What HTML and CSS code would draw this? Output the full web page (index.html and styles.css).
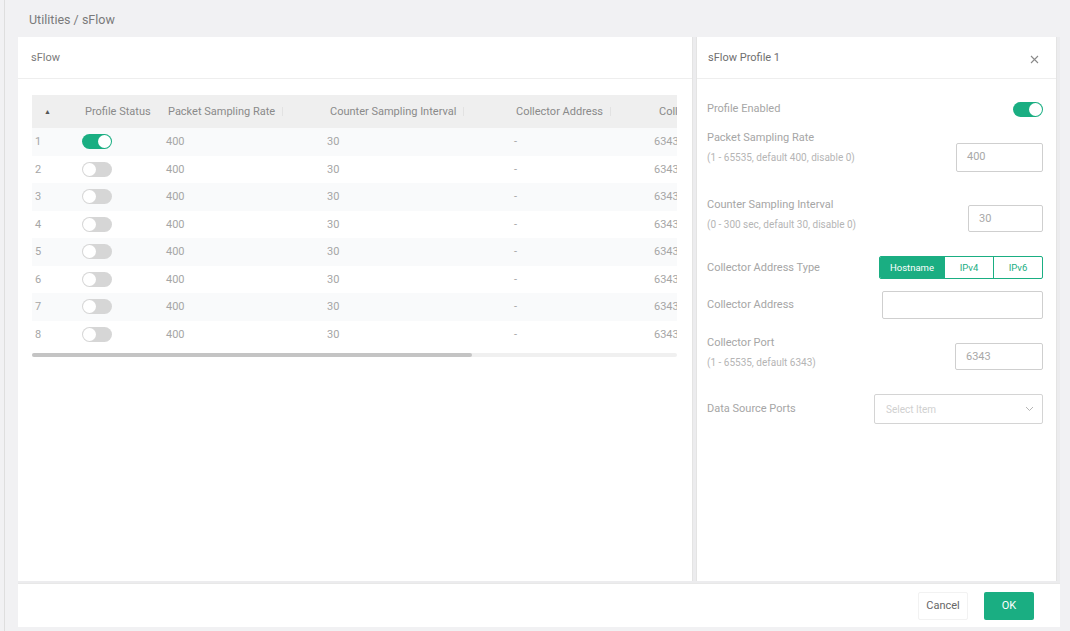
FILE: index.html
```html
<!DOCTYPE html>
<html lang="en">
<head>
  <meta charset="UTF-8">
  <meta name="viewport" content="width=device-width, initial-scale=1.0">
  <title>sFlow</title>
  <link rel="stylesheet" href="styles.css">
</head>
<body>
  <div class="app">
    <div class="crumb">Utilities / sFlow</div>
    <div class="dialog">
      <div class="main">
        <section class="card">
          <div class="card-title">sFlow</div>
          <div class="table-wrap">
            <table class="grid">
              <colgroup>
                <col class="c-num"><col class="c-status"><col class="c-rate"><col class="c-interval"><col class="c-addr"><col class="c-port">
              </colgroup>
              <thead>
                <tr>
                  <th class="num-h">&#9650;</th>
                  <th>Profile Status</th>
                  <th>Packet Sampling Rate <i class="sort"></i></th>
                  <th>Counter Sampling Interval <i class="sort"></i></th>
                  <th>Collector Address <i class="sort"></i></th>
                  <th>Collector Port</th>
                </tr>
              </thead>
              <tbody>
                <tr><td>1</td><td><span class="switch on"></span></td><td>400</td><td>30</td><td>-</td><td>6343</td></tr>
                <tr><td>2</td><td><span class="switch"></span></td><td>400</td><td>30</td><td>-</td><td>6343</td></tr>
                <tr><td>3</td><td><span class="switch"></span></td><td>400</td><td>30</td><td>-</td><td>6343</td></tr>
                <tr><td>4</td><td><span class="switch"></span></td><td>400</td><td>30</td><td>-</td><td>6343</td></tr>
                <tr><td>5</td><td><span class="switch"></span></td><td>400</td><td>30</td><td>-</td><td>6343</td></tr>
                <tr><td>6</td><td><span class="switch"></span></td><td>400</td><td>30</td><td>-</td><td>6343</td></tr>
                <tr><td>7</td><td><span class="switch"></span></td><td>400</td><td>30</td><td>-</td><td>6343</td></tr>
                <tr><td>8</td><td><span class="switch"></span></td><td>400</td><td>30</td><td>-</td><td>6343</td></tr>
              </tbody>
            </table>
            <div class="scroll"><div class="thumb"></div></div>
          </div>
        </section>

        <aside class="panel">
          <div class="panel-title">
            <span>sFlow Profile 1</span>
            <svg class="close" width="9" height="9" viewBox="0 0 9 9"><path d="M1 1L8 8M8 1L1 8" stroke="#8a8a8a" stroke-width="1.1"/></svg>
          </div>
          <div class="form">
            <div class="row r-enabled">
              <div class="label">Profile Enabled</div>
              <span class="switch on"></span>
            </div>
            <div class="row r-rate">
              <div>
                <div class="label">Packet Sampling Rate</div>
                <div class="hint">(1 - 65535, default 400, disable 0)</div>
              </div>
              <div class="input w-rate">400</div>
            </div>
            <div class="row r-interval">
              <div>
                <div class="label">Counter Sampling Interval</div>
                <div class="hint">(0 - 300 sec, default 30, disable 0)</div>
              </div>
              <div class="input w-interval">30</div>
            </div>
            <div class="row r-type">
              <div class="label">Collector Address Type</div>
              <div class="segment">
                <span class="seg active">Hostname</span>
                <span class="seg">IPv4</span>
                <span class="seg">IPv6</span>
              </div>
            </div>
            <div class="row r-addr">
              <div class="label">Collector Address</div>
              <div class="input w-addr"></div>
            </div>
            <div class="row r-port">
              <div>
                <div class="label">Collector Port</div>
                <div class="hint">(1 - 65535, default 6343)</div>
              </div>
              <div class="input w-port">6343</div>
            </div>
            <div class="row r-src">
              <div class="label">Data Source Ports</div>
              <div class="select">
                <span>Select Item</span>
                <svg width="9" height="6" viewBox="0 0 9 6"><path d="M1 1l3.5 3.5L8 1" fill="none" stroke="#b5b5b5" stroke-width="1"/></svg>
              </div>
            </div>
          </div>
        </aside>
      </div>

      <footer class="actions">
        <button class="btn cancel">Cancel</button>
        <button class="btn ok">OK</button>
      </footer>
    </div>
  </div>
</body>
</html>
```

FILE: styles.css
```css
body,
div,
section,
aside,
footer,
table,
th,
td,
span,
button {
  margin: 0;
  padding: 0;
  border: 0;
  box-sizing: border-box;
}

body {
  background: #f1f1f3;
  font-family: Roboto, "Liberation Sans", Arial, sans-serif;
  font-size: 11px;
  color: #8c8c8c;
}

.app {
  margin-left: 4px;
  border-left: 1px solid #dedede;
  padding: 0 10px 0 13px;
  height: 631px;
}

.crumb {
  height: 37px;
  line-height: 40px;
  padding-left: 11px;
  font-size: 12.5px;
  color: #7a7a7a;
}

.dialog {
  display: flex;
  flex-direction: column;
  height: 590px;
  background: #ececee;
}

.main {
  display: flex;
  gap: 3px;
  height: 544px;
}

/* left card */
.card {
  width: 675px;
  background: #fff;
  border-right: 1px solid #e4e4e4;
}
.card-title {
  height: 42px;
  line-height: 42px;
  padding-left: 13px;
  color: #7a7a7a;
  border-bottom: 1px solid #eeeeee;
}
.table-wrap {
  width: 645px;
  margin: 16px 0 0 14px;
  overflow: hidden;
}
.grid {
  width: 760px;
  table-layout: fixed;
  border-collapse: collapse;
}
.c-num { width: 45px; }
.c-status { width: 83px; }
.c-rate { width: 162px; }
.c-interval { width: 186px; }
.c-addr { width: 143px; }
.c-port { width: 141px; }

.grid th {
  height: 33px;
  background: #efefef;
  font-weight: 400;
  text-align: left;
  padding-left: 8px;
  color: #8a8a8a;
  white-space: nowrap;
}
.grid th.num-h {
  padding-left: 12px;
  font-size: 7px;
  color: #555;
}
.grid td {
  height: 27.5px;
  padding-left: 6px;
  color: #a6a6a6;
  white-space: nowrap;
}
.grid td:first-child { padding-left: 3px; }
.grid td:nth-child(2) { padding-left: 5px; }
.grid td:nth-child(4) { padding-left: 5px; }
.grid td:nth-child(6) { padding-left: 3px; }
.grid tbody tr:nth-child(odd) { background: #f9fafb; }

.sort {
  display: inline-block;
  width: 4px;
  height: 9px;
  margin-left: 4px;
  vertical-align: -1px;
  border-left: 1px solid #e2e2e2;
}

.switch {
  display: inline-block;
  position: relative;
  width: 30px;
  height: 15px;
  border-radius: 8px;
  background: #d6d6d6;
  vertical-align: middle;
}
.switch::after {
  content: "";
  position: absolute;
  top: 1px;
  left: 1px;
  width: 13px;
  height: 13px;
  border-radius: 50%;
  background: #fff;
}
.switch.on { background: #1aae82; }
.switch.on::after { left: 16px; }

.scroll {
  height: 4px;
  margin-top: 5px;
  width: 645px;
  background: #f0f0f0;
  border-radius: 2px;
}
.thumb {
  width: 440px;
  height: 4px;
  border-radius: 2px;
  background: #c4c4c4;
}

/* right panel */
.panel {
  width: 361px;
  background: #fff;
  border-left: 1px solid #e4e4e4;
  border-right: 1px solid #e4e4e4;
}
.panel-title {
  display: flex;
  justify-content: space-between;
  align-items: center;
  height: 42px;
  padding: 0 17px 0 11px;
  color: #6f6f6f;
  border-bottom: 1px solid #eeeeee;
}
.close { margin-top: 4px; }

.form {
  padding: 0 13px 0 10px;
}
.row {
  display: flex;
  justify-content: space-between;
  align-items: center;
}
.label {
  line-height: 16px;
  color: #a6a6a6;
}
.hint {
  margin-top: 4px;
  line-height: 16px;
  font-size: 10px;
  color: #b5b5b5;
}
.input {
  height: 28px;
  line-height: 26px;
  padding-left: 10px;
  border: 1px solid #cfcfcf;
  border-radius: 2px;
  color: #a8a8a8;
}

.r-enabled { margin-top: 22px; height: 16px; }
.r-rate { margin-top: 13px; align-items: flex-start; }
.r-rate .input { margin-top: 13px; height: 29px; }
.r-interval { margin-top: 25px; align-items: flex-start; }
.r-interval .input { margin-top: 8px; height: 27px; }
.r-type { margin-top: 23px; }
.r-addr { margin-top: 12px; }
.r-port { margin-top: 16px; align-items: flex-start; }
.r-port .input { margin-top: 8px; height: 27px; }
.r-src { margin-top: 23px; }

.w-rate { width: 87px; }
.w-interval { width: 75px; }
.w-addr { width: 161px; }
.w-port { width: 88px; }

.segment {
  display: flex;
  width: 164px;
  height: 23px;
  border: 1px solid #1aae82;
  border-radius: 2px;
  overflow: hidden;
}
.seg {
  flex: 1;
  text-align: center;
  line-height: 21px;
  font-size: 9.5px;
  color: #1aae82;
  border-left: 1px solid #1aae82;
}
.seg:first-child { border-left: 0; flex: 0 0 64px; }
.seg.active {
  background: #1aae82;
  color: #fff;
}

.select {
  display: flex;
  justify-content: space-between;
  align-items: center;
  width: 169px;
  height: 30px;
  padding: 0 8px 0 11px;
  border: 1px solid #d4d4d4;
  border-radius: 2px;
  font-size: 10px;
  color: #d0d0d0;
}

/* footer */
.actions {
  display: flex;
  justify-content: flex-end;
  align-items: center;
  gap: 16px;
  margin-top: 2px;
  height: 44px;
  padding-right: 26px;
  background: #fff;
  border-top: 1px solid #e8e8e8;
}
.btn {
  width: 50px;
  height: 28px;
  font-family: inherit;
  font-size: 11px;
  border-radius: 2px;
  cursor: pointer;
}
.cancel {
  background: #fff;
  color: #666;
  border: 1px solid #f2f2f2;
}
.ok {
  background: #1aae82;
  color: #fff;
}
```
